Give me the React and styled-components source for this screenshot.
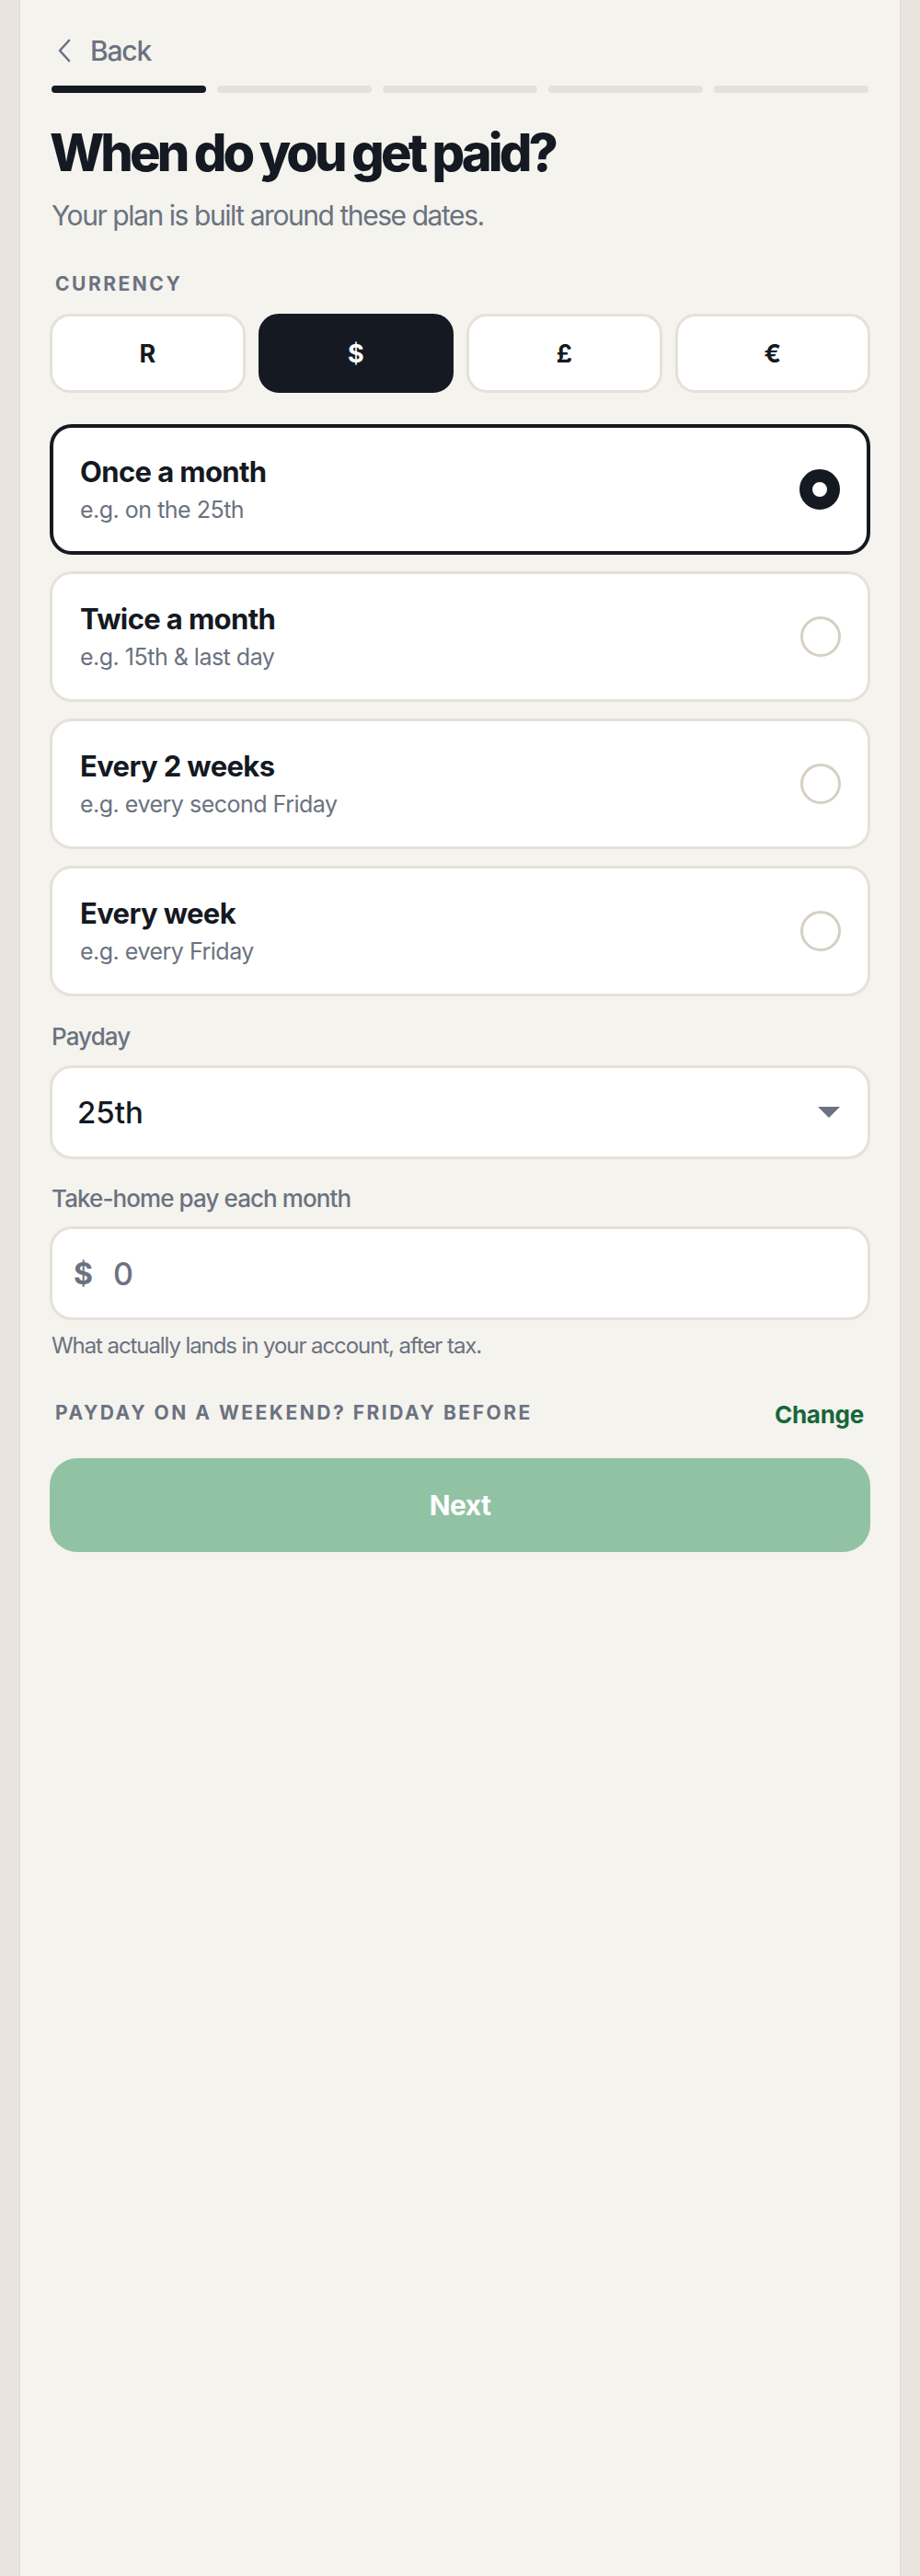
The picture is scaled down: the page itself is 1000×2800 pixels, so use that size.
import React, { useState } from 'react';
import styled, { createGlobalStyle } from 'styled-components';

const GlobalStyle = createGlobalStyle`
  html, body {
    margin: 0;
    padding: 0;
    background: #e9e5de;
  }
  * {
    box-sizing: border-box;
  }
`;

const currencies = ['R', '$', '£', '€'];

const frequencies = [
  { id: 'monthly', title: 'Once a month', hint: 'e.g. on the 25th' },
  { id: 'twice', title: 'Twice a month', hint: 'e.g. 15th & last day' },
  { id: 'fortnight', title: 'Every 2 weeks', hint: 'e.g. every second Friday' },
  { id: 'weekly', title: 'Every week', hint: 'e.g. every Friday' },
];

function App() {
  const [currency, setCurrency] = useState('$');
  const [frequency, setFrequency] = useState('monthly');

  return (
    <>
      <GlobalStyle />
      <Page>
        <BackButton>
          <svg width="16" height="26" viewBox="0 0 16 26" fill="none">
            <path d="M13 2 L3 13 L13 24" stroke="#6b7280" strokeWidth="2.6" strokeLinecap="round" strokeLinejoin="round" />
          </svg>
          Back
        </BackButton>

        <Progress>
          {[0, 1, 2, 3, 4].map((i) => (
            <Step key={i} active={i === 0} />
          ))}
        </Progress>

        <Title>When do you get paid?</Title>
        <Subtitle>Your plan is built around these dates.</Subtitle>

        <Caps>Currency</Caps>
        <CurrencyRow>
          {currencies.map((c) => (
            <CurrencyButton key={c} selected={c === currency} onClick={() => setCurrency(c)}>
              {c}
            </CurrencyButton>
          ))}
        </CurrencyRow>

        <Options>
          {frequencies.map((f) => (
            <Option key={f.id} selected={f.id === frequency} onClick={() => setFrequency(f.id)}>
              <div>
                <OptionTitle>{f.title}</OptionTitle>
                <OptionHint>{f.hint}</OptionHint>
              </div>
              <Radio selected={f.id === frequency} />
            </Option>
          ))}
        </Options>

        <FieldLabel>Payday</FieldLabel>
        <Select>
          25th
          <svg width="24" height="12" viewBox="0 0 24 12">
            <polygon points="0,0 24,0 12,12" fill="#6b7280" />
          </svg>
        </Select>

        <FieldLabel>Take-home pay each month</FieldLabel>
        <AmountBox>
          <Prefix>$</Prefix>
          <AmountInput placeholder="0" />
        </AmountBox>
        <Help>What actually lands in your account, after tax.</Help>

        <WeekendRow>
          <Caps as="span">Payday on a weekend? Friday before</Caps>
          <LinkButton>Change</LinkButton>
        </WeekendRow>

        <NextButton>Next</NextButton>
      </Page>
    </>
  );
}

export default App;

const Page = styled.div`
  max-width: 960px;
  min-height: 100vh;
  margin: 0 auto;
  padding: 34px 32px 60px;
  background: #f4f3ee;
  border-left: 2px solid #e2ddd4;
  border-right: 2px solid #e2ddd4;
  font-family: Inter, "Noto Sans", sans-serif;
  display: flex;
  flex-direction: column;
`;

const BackButton = styled.button`
  display: flex;
  align-items: center;
  gap: 20px;
  align-self: flex-start;
  border: none;
  background: none;
  padding: 0 0 0 8px;
  font-family: inherit;
  font-size: 30px;
  font-weight: 500;
  letter-spacing: -0.04em;
  color: #6b7280;
  height: 42px;
  cursor: pointer;
`;

const Progress = styled.div`
  display: grid;
  grid-template-columns: repeat(5, 1fr);
  gap: 12px;
  margin: 17px 2px 0;
`;

const Step = styled.div`
  height: 8px;
  border-radius: 4px;
  background: ${(p) => (p.active ? '#151a22' : '#e6e1d8')};
`;

const Title = styled.h1`
  margin: 34px 0 0;
  font-size: 56px;
  line-height: 62px;
  font-weight: 800;
  letter-spacing: -0.07em;
  color: #141922;
`;

const Subtitle = styled.p`
  margin: 19px 0 0 2px;
  font-size: 30px;
  line-height: 36px;
  letter-spacing: -0.048em;
  color: #6b7280;
`;

const Caps = styled.div`
  margin: 44px 0 0 6px;
  font-size: 21px;
  line-height: 26px;
  font-weight: 700;
  letter-spacing: 0.12em;
  text-transform: uppercase;
  color: #6b7280;
`;

const CurrencyRow = styled.div`
  display: grid;
  grid-template-columns: repeat(4, 1fr);
  gap: 14px;
  margin-top: 19px;
`;

const CurrencyButton = styled.button`
  height: 86px;
  border-radius: 22px;
  border: 3px solid ${(p) => (p.selected ? '#151a22' : '#e6e1d8')};
  background: ${(p) => (p.selected ? '#151a22' : '#ffffff')};
  color: ${(p) => (p.selected ? '#ffffff' : '#151a22')};
  font-family: inherit;
  font-size: 27px;
  font-weight: 700;
  cursor: pointer;
`;

const Options = styled.div`
  display: flex;
  flex-direction: column;
  gap: 18px;
  margin-top: 34px;
`;

const Option = styled.div`
  display: flex;
  align-items: center;
  justify-content: space-between;
  height: 142px;
  padding: 0 29px 0 ${(p) => (p.selected ? '29px' : '30px')};
  border-radius: 24px;
  border: ${(p) => (p.selected ? '4px solid #151a22' : '3px solid #e6e1d8')};
  background: #ffffff;
  cursor: pointer;
`;

const OptionTitle = styled.div`
  font-size: 31px;
  line-height: 38px;
  font-weight: 700;
  letter-spacing: -0.02em;
  color: #141922;
`;

const OptionHint = styled.div`
  margin-top: 6px;
  font-size: 25px;
  line-height: 32px;
  letter-spacing: -0.02em;
  color: #6b7280;
`;

const Radio = styled.span`
  width: 44px;
  height: 44px;
  border-radius: 50%;
  background: #ffffff;
  border: ${(p) => (p.selected ? '14px solid #151a22' : '3px solid #d6d0c4')};
  flex-shrink: 0;
`;

const FieldLabel = styled.div`
  margin: 28px 0 0 2px;
  font-size: 26px;
  line-height: 32px;
  font-weight: 500;
  letter-spacing: -0.035em;
  color: #6b7280;

  & + & {
    margin-top: 27px;
  }
`;

const Select = styled.div`
  display: flex;
  align-items: center;
  justify-content: space-between;
  height: 102px;
  margin: 15px 0 27px;
  padding: 0 30px 0 27px;
  border-radius: 24px;
  border: 3px solid #e6e1d8;
  background: #ffffff;
  font-size: 33px;
  font-weight: 500;
  color: #141922;

  & + ${FieldLabel} {
    margin-top: 0;
  }
`;

const AmountBox = styled.label`
  display: flex;
  align-items: center;
  gap: 22px;
  height: 102px;
  margin-top: 14px;
  padding: 0 23px;
  border-radius: 24px;
  border: 3px solid #e6e1d8;
  background: #ffffff;
`;

const Prefix = styled.span`
  font-size: 32px;
  font-weight: 700;
  color: #6b7280;
`;

const AmountInput = styled.input`
  flex: 1;
  border: none;
  outline: none;
  background: none;
  padding: 0;
  font-family: inherit;
  font-size: 34px;
  font-weight: 500;
  color: #141922;

  &::placeholder {
    color: #6b7280;
  }
`;

const Help = styled.p`
  margin: 13px 0 0 2px;
  font-size: 24px;
  line-height: 30px;
  letter-spacing: -0.045em;
  color: #6b7280;
`;

const WeekendRow = styled.div`
  display: flex;
  align-items: center;
  justify-content: space-between;
  margin-top: 40px;

  & > span {
    margin: 0 0 0 6px;
  }
`;

const LinkButton = styled.button`
  border: none;
  background: none;
  padding: 4px 7px 0 0;
  font-family: inherit;
  font-size: 26px;
  font-weight: 700;
  letter-spacing: -0.01em;
  color: #17663a;
  cursor: pointer;
`;

const NextButton = styled.button`
  height: 102px;
  margin-top: 32px;
  border: none;
  border-radius: 30px;
  background: #92c2a4;
  color: #ffffff;
  font-family: inherit;
  font-size: 30px;
  font-weight: 700;
  letter-spacing: -0.02em;
  cursor: pointer;
`;
